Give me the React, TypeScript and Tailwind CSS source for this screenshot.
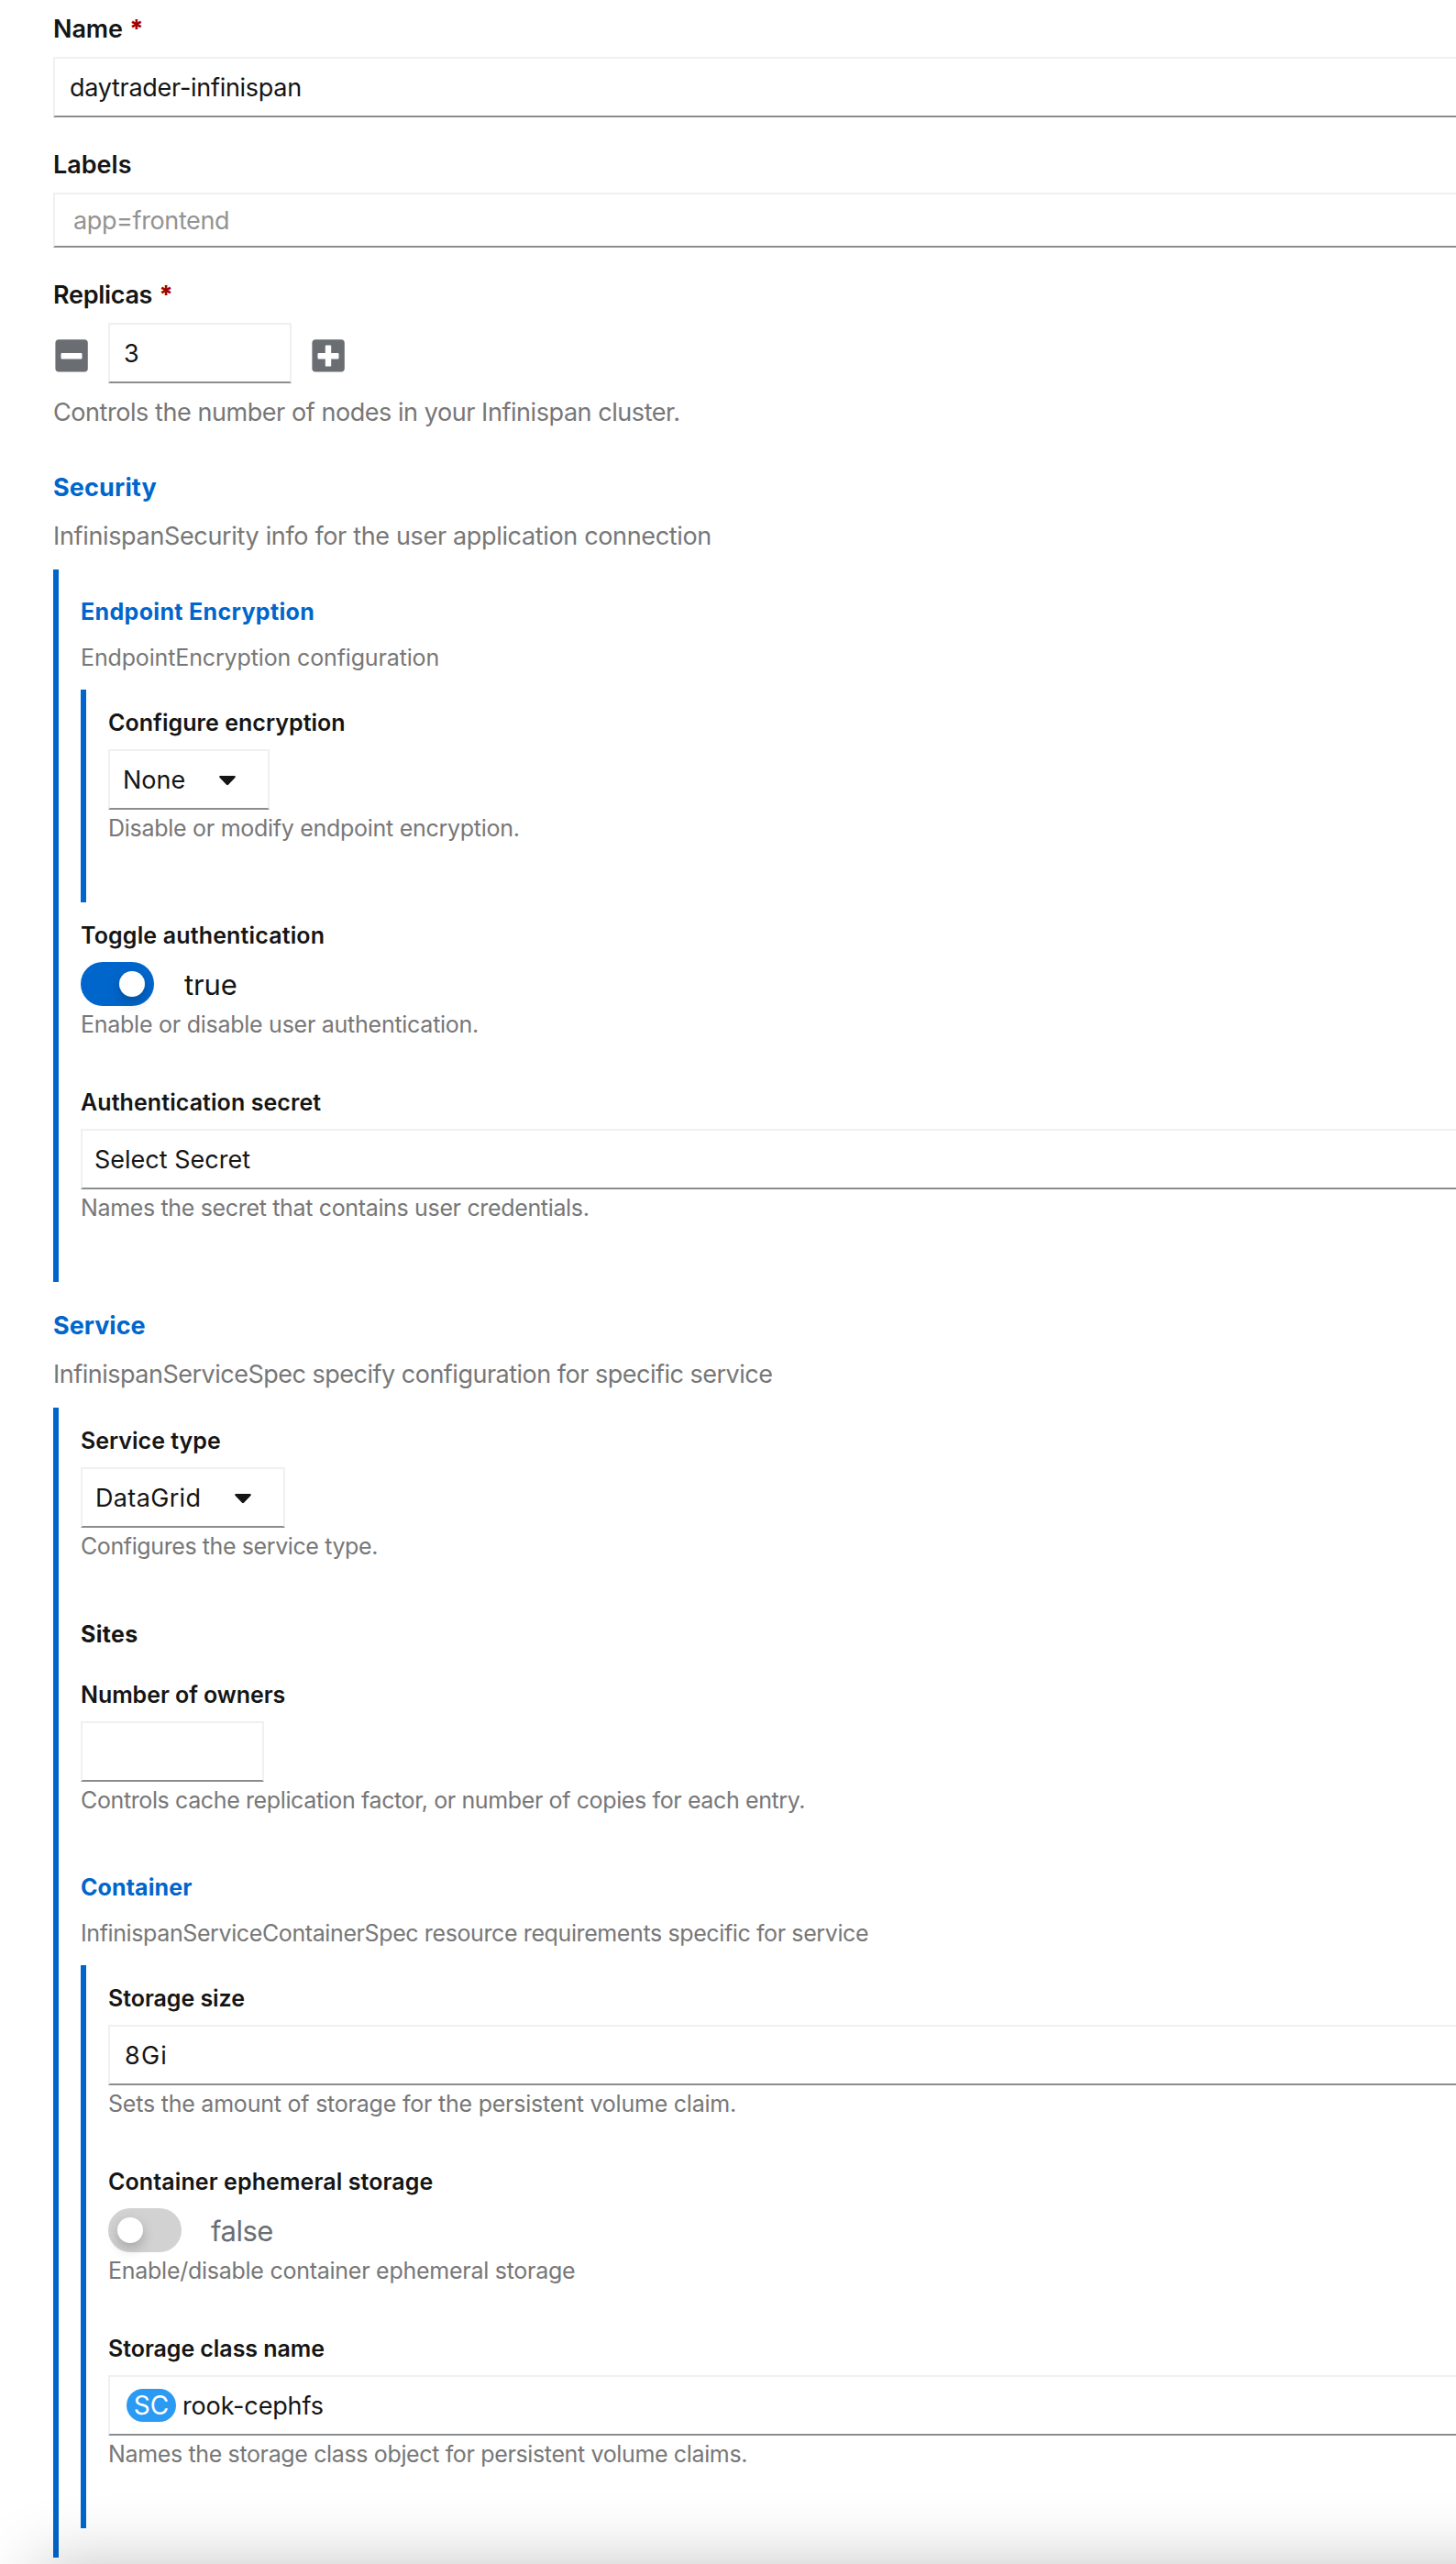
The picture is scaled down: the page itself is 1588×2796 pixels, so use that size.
import React from 'react';
import clsx from 'clsx';

interface TextProps {
  children?: React.ReactNode;
  className?: string;
}

interface FormFieldProps {
  label: string;
  labelClass?: string;
  help?: string;
  helpClass?: string;
  className?: string;
  children: React.ReactNode;
}

interface SectionProps {
  title: string;
  titleClass?: string;
  description: string;
  descriptionClass?: string;
  className?: string;
  bodyClass?: string;
  nested?: boolean;
  children: React.ReactNode;
}

const Label: React.FC<TextProps & { required?: boolean }> = ({ children, className, required = false }) => (
  <div className="flex h-10 whitespace-nowrap text-[27px] leading-[42px] font-semibold">
    <span className={className}>{children}</span>
    {required && <span className="ml-[7px] text-[27px] font-extrabold text-[#a30000]">*</span>}
  </div>
);

// Box with the light top/side borders and the dark bottom line.
const InputBox: React.FC<TextProps & { fixed?: boolean }> = ({ children, className, fixed = false }) => (
  <div
    className={clsx(
      'flex items-center whitespace-nowrap border-y-2 border-l-2 border-[#f0f0f0] border-b-[#8a8d90] bg-white pt-0.5 text-[27px]',
      fixed && 'border-r-2',
      className
    )}
  >
    {children}
  </div>
);

const FormField: React.FC<FormFieldProps> = ({ label, labelClass, help, helpClass, className, children }) => (
  <div className={className}>
    <div className="h-10 whitespace-nowrap text-[25px] leading-10 font-semibold">
      <span className={labelClass}>{label}</span>
    </div>
    <div className="mt-[9px]">{children}</div>
    {help && (
      <div className="h-10 whitespace-nowrap text-[25px] leading-10 text-[#777]">
        <span className={helpClass}>{help}</span>
      </div>
    )}
  </div>
);

const Section: React.FC<SectionProps> = ({
  title,
  titleClass,
  description,
  descriptionClass,
  className,
  bodyClass,
  nested = false,
  children,
}) => (
  <section className={className}>
    <h3
      className={clsx(
        'h-10 whitespace-nowrap font-bold text-[#06c]',
        nested ? 'text-[25px] leading-10' : 'text-[27px] leading-[42px]',
        titleClass
      )}
    >
      {title}
    </h3>
    <p
      className={clsx(
        'h-10 whitespace-nowrap text-[#777]',
        nested ? 'mt-2.5 text-[25px] leading-10' : 'mt-[13px] text-[27px] leading-[42px]',
        descriptionClass
      )}
    >
      {description}
    </p>
    <div className={clsx('border-l-6 border-[#06c] pl-6', nested ? 'mt-[15px]' : 'mt-[17px]', bodyClass)}>
      {children}
    </div>
  </section>
);

const Caret = () => (
  <svg className="h-[11px] w-[18px]" viewBox="0 0 18 11" fill="#151515">
    <path d="M1.4 0h15.2c1.1 0 1.6 1.3.8 2L10 9.8c-.6.6-1.4.6-2 0L.6 2C-.2 1.3.3 0 1.4 0z" />
  </svg>
);

const Dropdown: React.FC<TextProps> = ({ children, className }) => (
  <InputBox fixed className={clsx('h-[66px] justify-between pl-3.5 pr-[35px]', className)}>
    {children}
    <Caret />
  </InputBox>
);

const Toggle: React.FC<{ on: boolean }> = ({ on }) => (
  <div className="flex h-12 items-center">
    <div className={clsx('flex h-12 w-20 items-center rounded-full', on ? 'bg-[#06c] pl-[42px]' : 'bg-[#d2d2d2] pl-2.5')}>
      <div className="size-7 rounded-full bg-white shadow-[0_6px_14px_rgba(0,0,0,0.22)]" />
    </div>
    <span
      className={clsx('mt-px text-[31px] leading-10', on ? 'ml-[33px] tracking-[-0.1px]' : 'ml-8 tracking-[-0.5px] text-[#6a6e73]')}
    >
      {on ? 'true' : 'false'}
    </span>
  </div>
);

const StepButton: React.FC<{ type: 'minus' | 'plus' }> = ({ type }) => (
  <button className="mt-1.5 size-9" aria-label={type === 'plus' ? 'Increment' : 'Decrement'}>
    <svg viewBox="0 0 36 36" className="size-9">
      <rect x="0.4" y="0.2" width="35.4" height="35.4" rx="3.8" fill="#6a6e73" />
      <rect x="6.5" y="15" width="23" height="6.4" rx="0.9" fill="#fff" />
      {type === 'plus' && <rect x="14.8" y="6.6" width="6.4" height="23" rx="0.9" fill="#fff" />}
    </svg>
  </button>
);

export default function App() {
  return (
    <main className="relative h-[2796px] w-full overflow-hidden bg-white pt-[11px] pl-[58px] font-['Inter',sans-serif] text-[#151515]">
      <Label required className="tracking-[-0.1px]">Name</Label>
      <InputBox className="mt-[11px] h-[66px] pl-4 tracking-[-0.28px]">daytrader-infinispan</InputBox>

      <div className="mt-[31px]">
        <Label>Labels</Label>
        <InputBox className="mt-[11px] h-[60px] pl-5 tracking-[-0.38px] text-[#939393]">app=frontend</InputBox>
      </div>

      <div className="mt-[31px]">
        <Label required className="tracking-[-0.3px]">Replicas</Label>
        <div className="mt-[11px] flex items-center pl-0.5">
          <StepButton type="minus" />
          <InputBox fixed className="mx-[22px] h-[66px] w-[200px] pl-[15px]">3</InputBox>
          <StepButton type="plus" />
        </div>
        <p className="mt-[11px] h-10 whitespace-nowrap text-[27px] leading-[42px] tracking-[-0.44px] text-[#777]">
          Controls the number of nodes in your Infinispan cluster.
        </p>
      </div>

      <Section
        className="mt-[42px]"
        title="Security"
        titleClass="tracking-[0.15px]"
        description="InfinispanSecurity info for the user application connection"
        descriptionClass="tracking-[-0.34px]"
        bodyClass="pb-[61px]"
      >
        <Section
          nested
          className="pt-[26px]"
          title="Endpoint Encryption"
          titleClass="tracking-[0.34px]"
          description="EndpointEncryption configuration"
          descriptionClass="tracking-[-0.14px]"
          bodyClass="pt-4 pb-[61px]"
        >
          <FormField
            label="Configure encryption"
            labelClass="tracking-[0.04px]"
            help="Disable or modify endpoint encryption."
            helpClass="tracking-[-0.28px]"
          >
            <Dropdown className="w-[176px]">None</Dropdown>
          </FormField>
        </Section>

        <FormField
          className="mt-4"
          label="Toggle authentication"
          labelClass="tracking-[0.15px]"
          help="Enable or disable user authentication."
          helpClass="tracking-[-0.26px]"
        >
          <Toggle on />
        </FormField>

        <FormField
          className="mt-[45px]"
          label="Authentication secret"
          labelClass="tracking-[0.08px]"
          help="Names the secret that contains user credentials."
          helpClass="tracking-[-0.34px]"
        >
          <InputBox className="h-[66px] pl-[13px]">Select Secret</InputBox>
        </FormField>
      </Section>

      <Section
        className="mt-[27px]"
        title="Service"
        description="InfinispanServiceSpec specify configuration for specific service"
        descriptionClass="tracking-[-0.5px]"
        bodyClass="pt-4 pb-8"
      >
        <FormField
          label="Service type"
          help="Configures the service type."
          helpClass="tracking-[-0.4px]"
        >
          <Dropdown className="w-[223px] tracking-[0.35px]">DataGrid</Dropdown>
        </FormField>

        <h4 className="mt-14 h-10 text-[25px] leading-10 font-bold tracking-[0.3px]">Sites</h4>

        <FormField
          className="mt-[26px]"
          label="Number of owners"
          labelClass="tracking-[-0.06px]"
          help="Controls cache replication factor, or number of copies for each entry."
          helpClass="tracking-[-0.38px]"
        >
          <InputBox fixed className="h-[66px] w-[200px]" />
        </FormField>

        <Section
          nested
          className="mt-[55px]"
          title="Container"
          titleClass="tracking-[0.1px]"
          description="InfinispanServiceContainerSpec resource requirements specific for service"
          descriptionClass="tracking-[-0.39px]"
          bodyClass="pt-4 pb-[61px]"
        >
          <FormField
            label="Storage size"
            labelClass="tracking-[-0.05px]"
            help="Sets the amount of storage for the persistent volume claim."
            helpClass="tracking-[-0.22px]"
          >
            <InputBox className="h-[66px] pl-4 tracking-[1.2px]">8Gi</InputBox>
          </FormField>

          <FormField
            className="mt-[45px]"
            label="Container ephemeral storage"
            labelClass="tracking-[0.1px]"
            help="Enable/disable container ephemeral storage"
            helpClass="tracking-[-0.26px]"
          >
            <Toggle on={false} />
          </FormField>

          <FormField
            className="mt-[45px]"
            label="Storage class name"
            labelClass="tracking-[-0.06px]"
            help="Names the storage class object for persistent volume claims."
            helpClass="tracking-[-0.36px]"
          >
            <InputBox className="h-[66px] pl-[18px] tracking-[-0.15px]">
              <span className="mr-[7px] -mt-0.5 flex h-9 w-[54px] items-center justify-center rounded-full bg-[#2b9af3] text-[28px] tracking-normal text-white">
                SC
              </span>
              rook-cephfs
            </InputBox>
          </FormField>
        </Section>
      </Section>

      {/* Shadow cast upwards by the sticky footer */}
      <div className="pointer-events-none absolute top-full -right-40 left-10 h-40 shadow-[0_0_76px_rgba(0,0,0,0.23)]" />
    </main>
  );
}
